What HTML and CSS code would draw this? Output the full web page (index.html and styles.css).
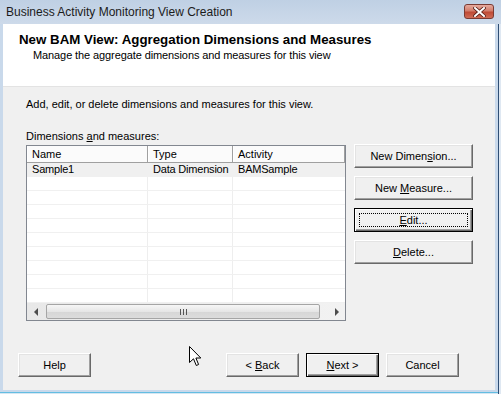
FILE: index.html
```html
<!DOCTYPE html>
<html lang="en">
<head>
    <meta charset="UTF-8">
    <title>Business Activity Monitoring View Creation</title>
    <link rel="stylesheet" href="styles.css">
</head>
<body>
    <div class="window">
        <div class="titlebar">
            <span class="title">Business Activity Monitoring View Creation</span>
            <span class="close-btn">
                <svg width="13" height="10" viewBox="0 0 13 10">
                    <path d="M2 1 L11 9 M11 1 L2 9" stroke="#5a2018" stroke-width="3.6" stroke-linecap="square"/>
                    <path d="M2 1 L11 9 M11 1 L2 9" stroke="#ffffff" stroke-width="2" stroke-linecap="square"/>
                </svg>
            </span>
        </div>

        <div class="client">
            <div class="banner">
                <h1>New BAM View: Aggregation Dimensions and Measures</h1>
                <p>Manage the aggregate dimensions and measures for this view</p>
            </div>

            <div class="page">
                <p class="intro">Add, edit, or delete dimensions and measures for this view.</p>
                <div class="label">Dimensions <u>a</u>nd measures:</div>

                <div class="editor">
                    <div class="listview">
                        <div class="lv-head">
                            <div class="col col-name">Name</div>
                            <div class="col col-type">Type</div>
                            <div class="col col-act">Activity</div>
                        </div>
                        <div class="lv-body">
                            <div class="row selected">
                                <div class="col col-name">Sample1</div>
                                <div class="col col-type">Data Dimension</div>
                                <div class="col col-act">BAMSample</div>
                            </div>
                            <div class="row"><div class="col col-name"></div><div class="col col-type"></div><div class="col col-act"></div></div>
                            <div class="row"><div class="col col-name"></div><div class="col col-type"></div><div class="col col-act"></div></div>
                            <div class="row"><div class="col col-name"></div><div class="col col-type"></div><div class="col col-act"></div></div>
                            <div class="row"><div class="col col-name"></div><div class="col col-type"></div><div class="col col-act"></div></div>
                            <div class="row"><div class="col col-name"></div><div class="col col-type"></div><div class="col col-act"></div></div>
                            <div class="row"><div class="col col-name"></div><div class="col col-type"></div><div class="col col-act"></div></div>
                            <div class="row"><div class="col col-name"></div><div class="col col-type"></div><div class="col col-act"></div></div>
                            <div class="row"><div class="col col-name"></div><div class="col col-type"></div><div class="col col-act"></div></div>
                            <div class="row"><div class="col col-name"></div><div class="col col-type"></div><div class="col col-act"></div></div>
                        </div>
                        <div class="hscroll">
                            <span class="sb-btn"><span class="arrow-left"></span></span>
                            <span class="sb-track">
                                <span class="sb-thumb"><span class="grip"></span></span>
                            </span>
                            <span class="sb-btn"><span class="arrow-right"></span></span>
                        </div>
                    </div>

                    <div class="side-buttons">
                        <button class="btn">New Dimen<u>s</u>ion...</button>
                        <button class="btn">New <u>M</u>easure...</button>
                        <button class="btn default focused"><u>E</u>dit...</button>
                        <button class="btn"><u>D</u>elete...</button>
                    </div>
                </div>

                <div class="footer">
                    <button class="btn wide">Help</button>
                    <button class="btn wide push">&lt; <u>B</u>ack</button>
                    <button class="btn wide default"><u>N</u>ext &gt;</button>
                    <button class="btn wide">Cancel</button>
                </div>
            </div>
        </div>

        <!-- mouse pointer caught in the screenshot -->
        <svg class="cursor" width="13" height="21" viewBox="0 0 13 21">
            <path d="M0.5 0.5 L0.5 16.5 L4.5 12.8 L7.3 19.5 L9.6 18.5 L6.9 12 L11.8 12 Z" fill="#ffffff" stroke="#000000" stroke-width="1"/>
        </svg>
    </div>
</body>
</html>
```

FILE: styles.css
```css
body {
    margin: 0;
    font-family: 'Liberation Sans', Arial, sans-serif;
    font-size: 11px;
    color: #000;
}

.window {
    position: relative;
    width: 501px;
    height: 394px;
    box-sizing: border-box;
    display: flex;
    flex-direction: column;
    background-color: #c9d9eb;
    box-shadow: inset -2px 0 #dfe8f2, inset -3px 0 #2f4e74, inset 0 -1px #d6e6f2, inset 0 -2px #63bde2;
    overflow: hidden;
}

.titlebar {
    height: 24px;
    flex: none;
    display: flex;
    justify-content: space-between;
    align-items: flex-start;
    padding: 0 7px 0 6px;
    background: linear-gradient(#bfd0e4, #cddaea);
}

.title {
    font-size: 12px;
    line-height: 25px;
    color: #1b1b1b;
}

.close-btn {
    margin-top: 4px;
    width: 28px;
    height: 13px;
    border: 1px solid #7a3b33;
    border-radius: 3px;
    background: linear-gradient(#e6aa9e, #d27d6b 45%, #bf4a35 55%, #cf6c56);
    display: flex;
    align-items: center;
    justify-content: center;
}

.client {
    flex: 1;
    margin: 0 6px 4px 3px;
    display: flex;
    flex-direction: column;
    background-color: #f0f0f0;
}

.banner {
    height: 63px;
    box-sizing: border-box;
    padding-top: 8px;
    background-color: #ffffff;
    border-bottom: 1px solid #e3e3e3;
}

.banner h1 {
    margin: 0 0 1px 16px;
    font-size: 13.3px;
    line-height: 16px;
    font-weight: bold;
}

.banner p {
    margin: 0 0 0 30px;
    line-height: 13px;
    letter-spacing: -0.1px;
}

.page {
    flex: 1;
    padding: 11px 0 0 23px;
}

.intro {
    margin: 0;
    line-height: 13px;
}

.label {
    margin-top: 19px;
    margin-bottom: 2px;
    line-height: 13px;
}

.editor {
    display: flex;
    gap: 8px;
    align-items: flex-start;
}

/* list view */
.listview {
    width: 318px;
    height: 174px;
    border: 1px solid #828790;
    background-color: #ffffff;
    display: flex;
    flex-direction: column;
}

.lv-head {
    display: flex;
    height: 16px;
    border-bottom: 1px solid #a0a0a0;
    background-color: #fbfbfb;
}

.lv-head .col {
    line-height: 16px;
    border-right: 1px solid #a0a0a0;
    box-shadow: inset 1px 0 #ffffff;
}

.col {
    box-sizing: border-box;
    padding-left: 5px;
    white-space: nowrap;
    overflow: hidden;
}

.col-name { width: 121px; }
.col-type { width: 85px; }
.col-act { flex: 1; }

.lv-body {
    height: 140px;
    overflow: hidden;
}

.row {
    display: flex;
    height: 14px;
    border-bottom: 1px solid #f0f0f0;
    box-sizing: border-box;
}

.row .col {
    line-height: 13px;
    letter-spacing: -0.2px;
    border-right: 1px solid #eeeeee;
}

.row .col-act { border-right: none; }

.row.selected {
    background-color: #f0f0f0;
}

.row.selected .col { border-right-color: #f0f0f0; }

.hscroll {
    height: 17px;
    display: flex;
    background: linear-gradient(90deg, #e8e8e8, #f2f2f2);
}

.sb-btn {
    width: 17px;
    display: flex;
    align-items: center;
    justify-content: center;
}

.arrow-left {
    border-top: 4px solid transparent;
    border-bottom: 4px solid transparent;
    border-right: 4px solid #4d4d4d;
}

.arrow-right {
    border-top: 4px solid transparent;
    border-bottom: 4px solid transparent;
    border-left: 4px solid #4d4d4d;
}

.sb-track {
    flex: 1;
    padding: 0 8px 0 2px;
    display: flex;
}

.sb-thumb {
    flex: 1;
    margin: 1px 0;
    border: 1px solid #a5a5a5;
    border-radius: 2px;
    background: linear-gradient(#f6f6f6, #e6e6e6 50%, #d6d6d6 51%, #dcdcdc);
    display: flex;
    align-items: center;
    justify-content: center;
}

.grip {
    width: 7px;
    height: 6px;
    background: repeating-linear-gradient(90deg, #555555 0 1px, transparent 1px 3px);
}

/* buttons */
.btn {
    display: block;
    box-sizing: border-box;
    height: 24px;
    padding: 0;
    font-family: inherit;
    font-size: 11px;
    color: #000;
    background-color: #f0f0f0;
    border: 1px solid;
    border-color: #ffffff #696969 #696969 #ffffff;
    box-shadow: inset -1px -1px #a0a0a0, inset 1px 1px #e3e3e3;
    position: relative;
}

.btn.default {
    border: 1px solid #000000;
    box-shadow: inset 1px 1px #ffffff, inset -1px -1px #696969, inset -2px -2px #a0a0a0;
}

.btn.focused::after {
    content: '';
    position: absolute;
    left: 4px;
    right: 4px;
    top: 4px;
    bottom: 4px;
    border: 1px dotted #000000;
}

.side-buttons {
    width: 119px;
    margin-top: -1px;
    display: flex;
    flex-direction: column;
    gap: 8px;
}

.footer {
    display: flex;
    gap: 7px;
    margin: 32px 36px 0 -8px;
}

.btn.wide {
    width: 73px;
}

.push {
    margin-left: auto;
}

.cursor {
    position: absolute;
    left: 189px;
    top: 346px;
}
```
